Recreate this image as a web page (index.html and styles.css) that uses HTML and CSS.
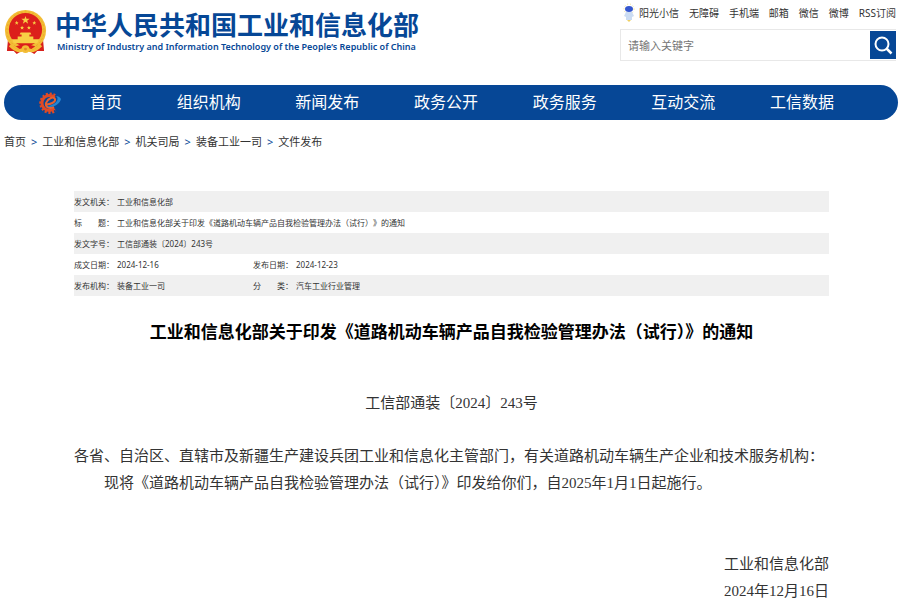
FILE: index.html
```
<!DOCTYPE html>
<html lang="zh-CN">
<head>
    <meta charset="UTF-8">
    <meta name="viewport" content="width=device-width, initial-scale=1.0">
    <title>工业和信息化部关于印发《道路机动车辆产品自我检验管理办法（试行）》的通知</title>
    <link rel="stylesheet" href="styles.css">
</head>
<body>

    <header class="header">
        <a class="logo" href="#">
            <svg class="emblem" viewBox="0 0 44 48" aria-hidden="true">
                <path d="M4 32 L3 43 L10 43 L13 46 L18 43 L26 43 L31 46 L34 43 L41 43 L40 32 Z" fill="#d8201c"/>
                <circle cx="22" cy="22" r="21" fill="#f3bd35"/>
                <circle cx="22" cy="22" r="19" fill="none" stroke="#eaa82a" stroke-width="1" stroke-dasharray="2 2"/>
                <circle cx="22" cy="21" r="17" fill="#dc1f1b"/>
                <path d="M22 7 l1 3 h3.200 l-2.500 2 l1 3 l-2.700 -1.900 l-2.700 1.900 l1 -3 l-2.500 -2 h3.200z" fill="#f8cf45"/>
                <g fill="#f8cf45">
                    <path d="M13 12l.6 1.400h1.400l-1.100 1 .4 1.600-1.300-.9-1.300.9.4-1.600-1.100-1h1.400z"/>
                    <path d="M31 12l.6 1.400h1.400l-1.100 1 .4 1.600-1.300-.9-1.300.9.4-1.600-1.100-1h1.400z"/>
                    <path d="M18.500 17l.6 1.400h1.400l-1.100 1 .4 1.600-1.300-.9-1.300.9.4-1.600-1.100-1h1.400z"/>
                    <path d="M25.500 17l.6 1.400h1.400l-1.100 1 .4 1.600-1.300-.9-1.300.9.4-1.600-1.100-1h1.400z"/>
                    <path d="M17 24h10l1 2h-12z M18 26h8v2h-8z M14 28h16v3H14z M8 31h28l-2 4H10z"/>
                </g>
                <path d="M6 37 Q14 45 19 42 M38 37 Q30 45 25 42" stroke="#f3bd35" stroke-width="3" fill="none"/>
                <path d="M12 38 Q22 35 32 38 L28 41 Q22 38 16 41 Z" fill="#dc1f1b"/>
                <circle cx="22" cy="41" r="4" fill="#f3bd35"/>
                <circle cx="22" cy="41" r="1.500" fill="#e58a24"/>
            </svg>
            <span class="logo-text">
                <span class="logo-cn">中华人民共和国工业和信息化部</span>
                <span class="logo-en">Ministry of Industry and Information Technology of the People’s Republic of China</span>
            </span>
        </a>
        <div class="tools">
            <div class="top-links">
                <a class="sunny" href="#">
                    <svg class="robot" viewBox="0 0 12 20" aria-hidden="true">
                        <circle cx="6" cy="6" r="5" fill="none" stroke="#f0e08c" stroke-width="1" stroke-dasharray="1 2"/>
                        <ellipse cx="6" cy="6" rx="4" ry="3" fill="#3557cf"/>
                        <path d="M3 9h6l2 4-2 1v3H3v-3l-2-1z" fill="#cbdcf3"/>
                        <path d="M4 17l2 2 2-2z" fill="#efd060"/>
                    </svg>阳光小信</a>
                <a href="#">无障碍</a>
                <a href="#">手机端</a>
                <a href="#">邮箱</a>
                <a href="#">微信</a>
                <a href="#">微博</a>
                <a href="#">RSS订阅</a>
            </div>
            <form class="search">
                <input type="text" placeholder="请输入关键字" aria-label="请输入关键字">
                <button type="button" aria-label="搜索">
                    <svg viewBox="0 0 26 26" aria-hidden="true">
                        <circle cx="12" cy="12" r="6.500" fill="none" stroke="#fff" stroke-width="2"/>
                        <path d="M16.500 16.500l5 5" stroke="#fff" stroke-width="2.500"/>
                    </svg>
                </button>
            </form>
        </div>
    </header>

    <nav class="nav">
        <svg class="gear" viewBox="0 0 24 24" aria-hidden="true">
            <path d="M17 4.500 A9.200 9.200 0 1 0 17.500 19.500" fill="none" stroke="#e04a25" stroke-width="3" stroke-dasharray="2 1.600"/>
            <path d="M16.500 6.500 A7.500 7.500 0 1 0 16.500 17.500" fill="none" stroke="#e04a25" stroke-width="3"/>
            <path d="M8 13 C12 14 18 11 17 8 C16 5 10 7 8 12 C7 17 12 18 16 16" fill="none" stroke="#e8602f" stroke-width="2"/>
            <path d="M9 15 C14 18 22 13 23 8 C22 6 20 5 18 5 C22 8 18 14 9 15Z" fill="#2585cf"/>
        </svg>
        <ul>
            <li><a href="#">首页</a></li>
            <li><a href="#">组织机构</a></li>
            <li><a href="#">新闻发布</a></li>
            <li><a href="#">政务公开</a></li>
            <li><a href="#">政务服务</a></li>
            <li><a href="#">互动交流</a></li>
            <li><a href="#">工信数据</a></li>
        </ul>
    </nav>

    <div class="crumbs">
        <a href="#">首页</a><span>&gt;</span><a href="#">工业和信息化部</a><span>&gt;</span><a href="#">机关司局</a><span>&gt;</span><a href="#">装备工业一司</a><span>&gt;</span><a href="#">文件发布</a>
    </div>

    <main class="content">
        <table class="info">
            <tr><th>发文机关：</th><td colspan="3">工业和信息化部</td></tr>
            <tr><th><span class="spread"><i>标</i><i>题：</i></span></th><td colspan="3">工业和信息化部关于印发《道路机动车辆产品自我检验管理办法（试行）》的通知</td></tr>
            <tr><th>发文字号：</th><td colspan="3">工信部通装〔2024〕243号</td></tr>
            <tr><th>成文日期：</th><td class="first">2024-12-16</td><th>发布日期：</th><td>2024-12-23</td></tr>
            <tr><th>发布机构：</th><td class="first">装备工业一司</td><th><span class="spread"><i>分</i><i>类：</i></span></th><td>汽车工业行业管理</td></tr>
        </table>

        <h1>工业和信息化部关于印发《道路机动车辆产品自我检验管理办法（试行）》的通知</h1>

        <div class="article">
            <p class="number">工信部通装〔2024〕243号</p>
            <p>各省、自治区、直辖市及新疆生产建设兵团工业和信息化主管部门，有关道路机动车辆生产企业和技术服务机构：</p>
            <p class="indent">现将《道路机动车辆产品自我检验管理办法（试行）》印发给你们，自2025年1月1日起施行。</p>
            <div class="sign">
                <p>工业和信息化部</p>
                <p>2024年12月16日</p>
            </div>
        </div>
    </main>

</body>
</html>
```
FILE: styles.css
```
* {
    box-sizing: border-box;
}
body {
    margin: 0;
    font-family: "Noto Sans", "Noto Sans CJK SC", sans-serif;
    font-size: 11px;
    color: #333;
    background-color: #fff;
}
a {
    color: inherit;
    text-decoration: none;
}
.header {
    display: flex;
    justify-content: space-between;
    padding: 4px 4px 0;
}
.logo {
    display: flex;
    align-items: flex-start;
    gap: 8px;
    padding-top: 5px;
    color: #064796;
}
.emblem {
    width: 43px;
    height: 47px;
}
.logo-text {
    display: flex;
    flex-direction: column;
}
.logo-cn {
    font-size: 26px;
    font-weight: bold;
    line-height: 32px;
    white-space: nowrap;
}
.logo-en {
    padding-left: 2px;
    font-size: 9px;
    font-weight: 600;
    line-height: 12px;
    white-space: nowrap;
}
.tools {
    width: 276px;
}
.top-links {
    display: flex;
    justify-content: space-between;
    align-items: center;
    height: 17px;
    padding-left: 3px;
    font-size: 10px;
    white-space: nowrap;
}
.sunny {
    display: flex;
    align-items: center;
    gap: 4px;
}
.robot {
    width: 12px;
    height: 20px;
}
.search {
    display: flex;
    height: 32px;
    margin-top: 8px;
    border: 1px solid #e8e8e8;
    border-right: none;
    padding: 1px 0 1px 1px;
}
.search input {
    flex: 1;
    min-width: 0;
    border: none;
    padding: 0 6px;
    font-family: inherit;
    font-size: 11px;
}
.search input::placeholder {
    color: #757575;
}
.search button {
    width: 26px;
    border: none;
    padding: 0;
    background-color: #064796;
    cursor: pointer;
}
.search svg {
    display: block;
    width: 26px;
    height: 26px;
}
.nav {
    display: flex;
    align-items: center;
    height: 35px;
    margin: 24px 2px 0 4px;
    padding-left: 34px;
    border-radius: 18px;
    background-color: #064796;
}
.gear {
    width: 24px;
    height: 24px;
}
.nav ul {
    display: flex;
    flex: 1;
    justify-content: space-between;
    margin: 0;
    padding: 0 64px 0 28px;
    list-style: none;
}
.nav li {
    line-height: 24px;
}
.nav a {
    color: #fff;
    font-size: 16px;
}
.crumbs {
    padding: 12px 4px 0;
    line-height: 20px;
}
.crumbs span {
    margin: 0 5px;
    color: #064796;
}
.content {
    margin: 39px 71px 0 74px;
}
.info {
    width: 100%;
    border-collapse: collapse;
    font-size: 8px;
    text-spacing-trim: space-all;
}
.info tr:nth-child(odd) {
    background-color: #f0f0f0;
}
.info th,
.info td {
    height: 21px;
    padding: 0;
    font-weight: normal;
    text-align: left;
}
.info th {
    width: 43px;
}
.info .first {
    width: 136px;
}
.spread {
    display: flex;
    justify-content: space-between;
    width: 40px;
}
.spread i {
    font-style: normal;
}
h1 {
    margin: 23px 0 0;
    font-size: 17px;
    line-height: 26px;
    text-align: center;
    color: #000;
}
.article {
    font-family: "Liberation Serif", "Noto Sans CJK SC", sans-serif;
    font-size: 15px;
    line-height: 27px;
}
.article p {
    margin: 0;
}
.article .number {
    margin: 45px 0 26px;
    text-align: center;
}
.article .indent {
    text-indent: 2em;
}
.sign {
    margin-top: 54px;
    text-align: right;
}
```
